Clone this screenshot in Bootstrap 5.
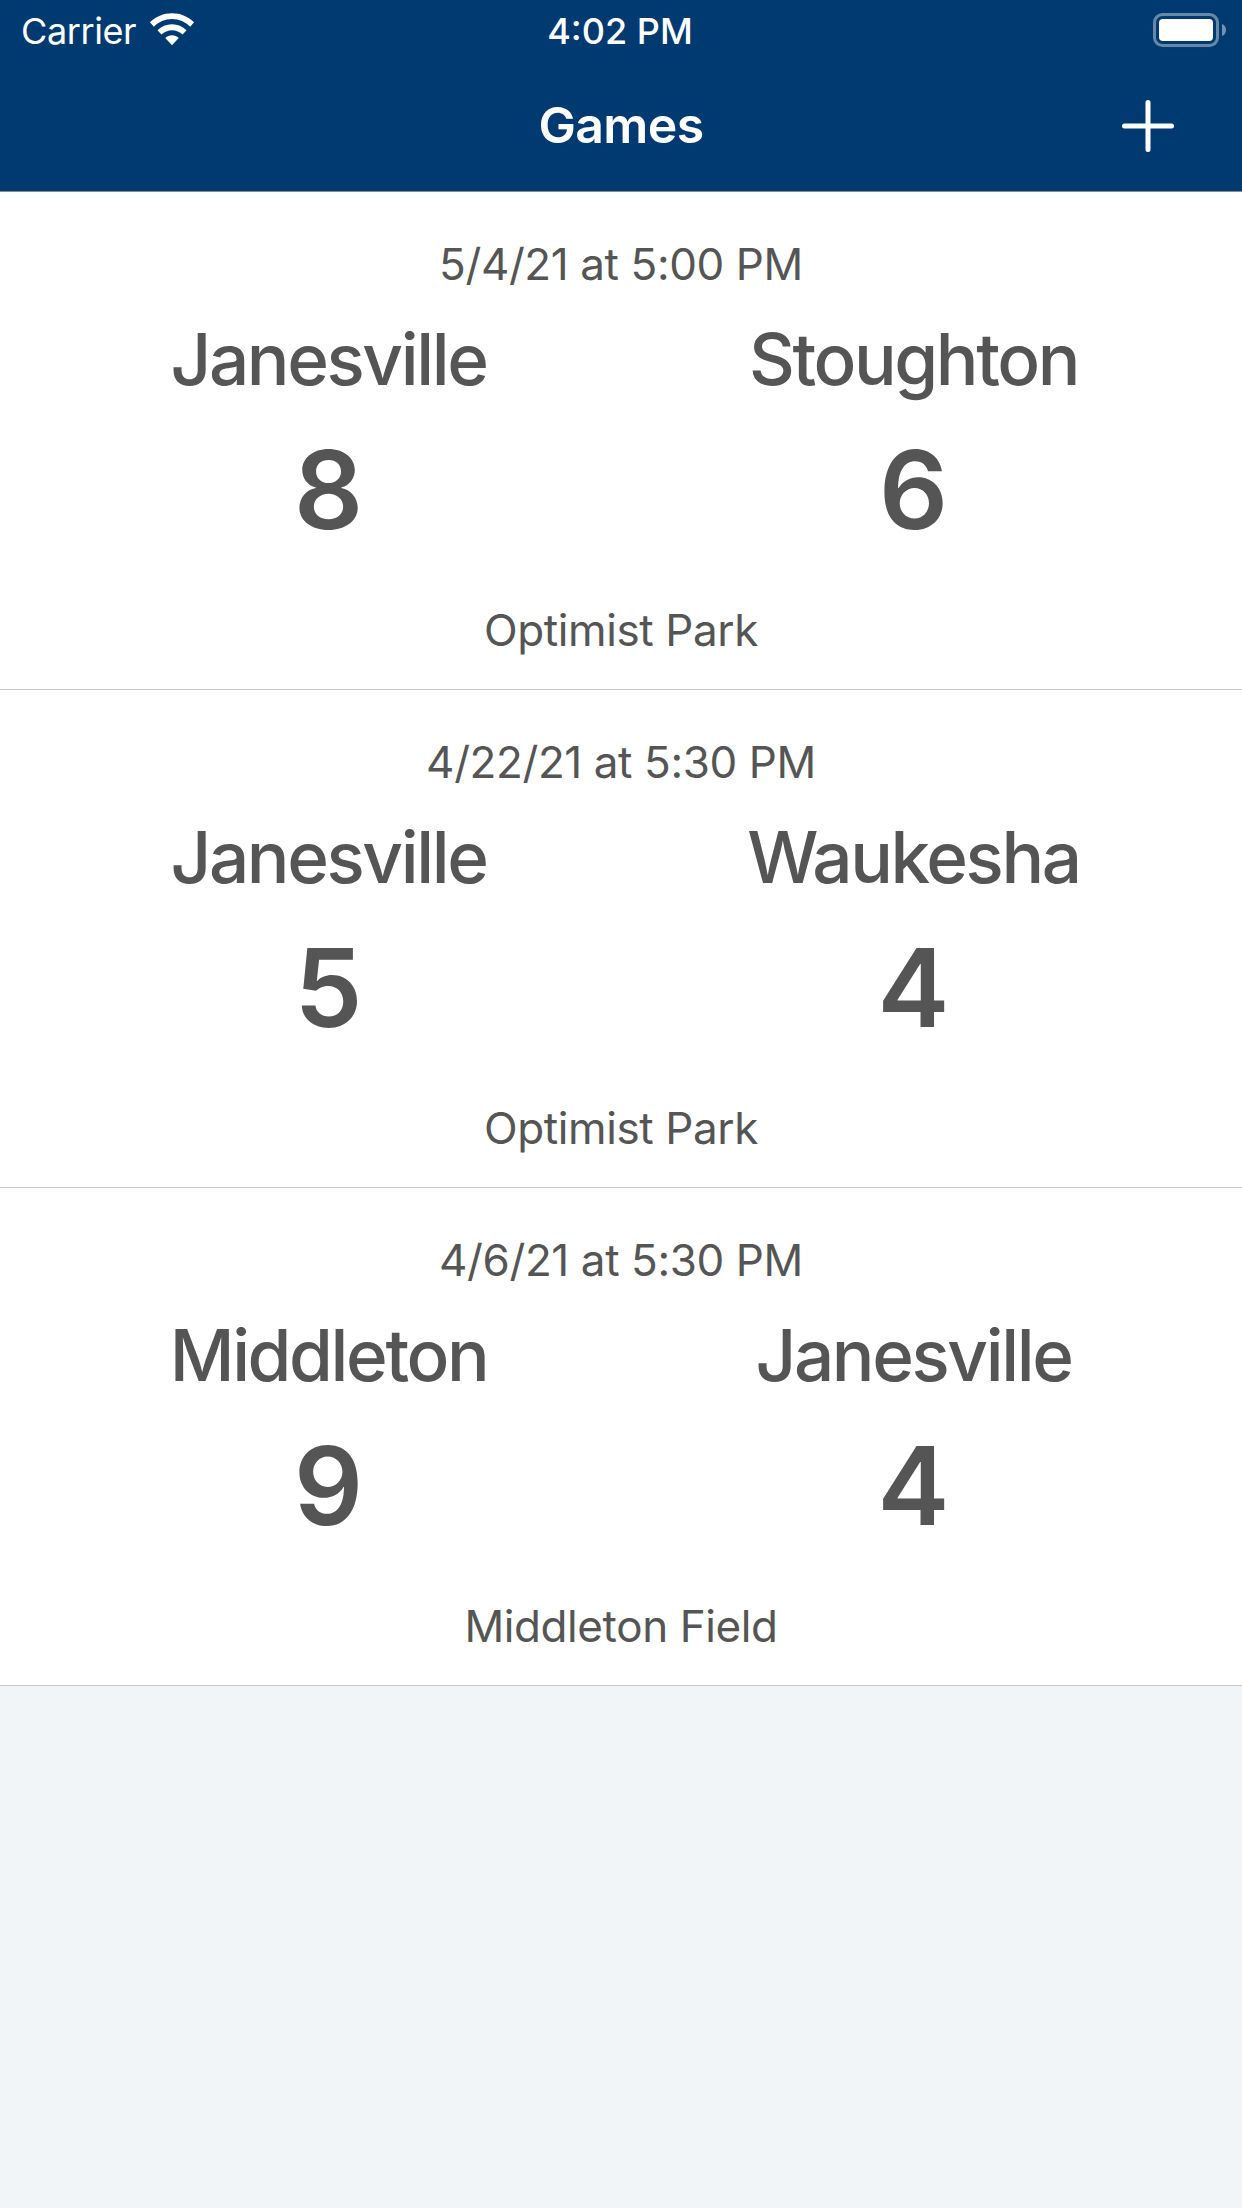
<!DOCTYPE html>
<html lang="en">
<head>
  <meta charset="UTF-8">
  <meta name="viewport" content="width=device-width, initial-scale=1">
  <title>Games</title>
  <link href="https://cdn.jsdelivr.net/npm/bootstrap@5.3.0/dist/css/bootstrap.min.css" rel="stylesheet">
  <style>
    body {
      background-color: #f2f5f8;
      font-family: Inter, "Liberation Sans", sans-serif;
      color: #555;
      min-height: 2208px;
    }
    .app-header {
      background-color: #003a70;
      color: #fff;
      height: 192px;
      border-bottom: 1px solid #8a8a8a;
    }
    .status-row {
      height: 60px;
      padding: 2px 16px 0 21px;
    }
    .status-left {
      width: 340px;
      gap: 13px;
    }
    .status-right {
      width: 347px;
    }
    .wifi-icon {
      margin-bottom: 3px;
    }
    .carrier {
      font-size: 36px;
      font-weight: 400;
      letter-spacing: -0.4px;
    }
    .clock {
      font-size: 36px;
      font-weight: 500;
    }
    .title-row {
      height: 131px;
      padding: 0 67px 0 0;
    }
    .title-spacer {
      width: 54px;
      margin-left: 67px;
    }
    .screen-title {
      font-size: 50px;
      font-weight: 600;
      letter-spacing: -0.6px;
    }
    .game-row {
      background-color: #fff;
      height: 498px;
      border-bottom: 1px solid #c8c8c8;
      padding-top: 45px;
    }
    .game-date, .game-place {
      font-size: 44px;
      line-height: 54px;
      font-weight: 400;
      letter-spacing: -0.4px;
    }
    .team-wrap {
      padding: 0 36px;
    }
    .team-name {
      font-size: 71px;
      line-height: 86px;
      font-weight: 500;
      letter-spacing: -2.4px;
      margin-top: 25px;
    }
    .team-score {
      font-size: 108px;
      line-height: 130px;
      font-weight: 600;
      margin-top: 23px;
    }
    .game-place {
      margin-top: 48px;
    }
    .team-col {
      width: 50%;
    }
  </style>
</head>
<body class="m-0">

  <!-- Header -->
  <div class="app-header">
    <div class="status-row d-flex align-items-center justify-content-between">
      <div class="status-left d-flex align-items-center">
        <span class="carrier">Carrier</span>
        <svg class="wifi-icon" width="46" height="33" viewBox="0 0 48 34" fill="#fff">
          <path d="M24 0C15 0 7 3.500 1 9.500L5 14C10 9 16.500 6 24 6S38 9 43 14L47 9.500C41 3.500 33 0 24 0Z"/>
          <path d="M24 11.500C18 11.500 13 13.800 8.800 17.800L13 22.200C16 19.400 19.800 17.700 24 17.700S32 19.400 35 22.200L39.200 17.800C35 13.800 30 11.500 24 11.500Z"/>
          <path d="M24 23C21.300 23 18.900 24 17 25.800L24 33.500L31 25.800C29.100 24 26.700 23 24 23Z"/>
        </svg>
      </div>
      <span class="clock">4:02 PM</span>
      <div class="status-right d-flex align-items-center justify-content-end">
        <svg width="74" height="36" viewBox="0 0 74 36">
          <rect x="2.500" y="1.500" width="63" height="31" rx="8" fill="none" stroke="#fff" stroke-opacity="0.4" stroke-width="3"/>
          <rect x="7" y="6" width="54" height="22" rx="4" fill="#fff"/>
          <path d="M70 11C73 12 74 14.500 74 17S73 22 70 23Z" fill="#fff" fill-opacity="0.45"/>
        </svg>
      </div>
    </div>
    <div class="title-row d-flex align-items-center justify-content-between">
      <div class="title-spacer"></div>
      <span class="screen-title">Games</span>
      <svg width="54" height="54" viewBox="0 0 54 54" stroke="#fff" stroke-width="5" stroke-linecap="round">
        <path d="M27 3.500V50.500M3.500 27H50.500"/>
      </svg>
    </div>
  </div>

  <!-- Game list -->
  <div id="gameList"></div>

<script>
  const games = [
    { date: '5/4/21 at 5:00 PM', home: 'Janesville', homeScore: 8, away: 'Stoughton', awayScore: 6, place: 'Optimist Park' },
    { date: '4/22/21 at 5:30 PM', home: 'Janesville', homeScore: 5, away: 'Waukesha', awayScore: 4, place: 'Optimist Park' },
    { date: '4/6/21 at 5:30 PM', home: 'Middleton', homeScore: 9, away: 'Janesville', awayScore: 4, place: 'Middleton Field' }
  ];

  document.getElementById('gameList').innerHTML = games.map(g => `
    <div class="game-row text-center">
      <div class="game-date">${g.date}</div>
      <div class="team-wrap d-flex">
        <div class="team-col">
          <div class="team-name">${g.home}</div>
          <div class="team-score">${g.homeScore}</div>
        </div>
        <div class="team-col">
          <div class="team-name">${g.away}</div>
          <div class="team-score">${g.awayScore}</div>
        </div>
      </div>
      <div class="game-place">${g.place}</div>
    </div>`).join('');
</script>
<script src="https://cdn.jsdelivr.net/npm/bootstrap@5.3.0/dist/js/bootstrap.bundle.min.js"></script>
</body>
</html>
